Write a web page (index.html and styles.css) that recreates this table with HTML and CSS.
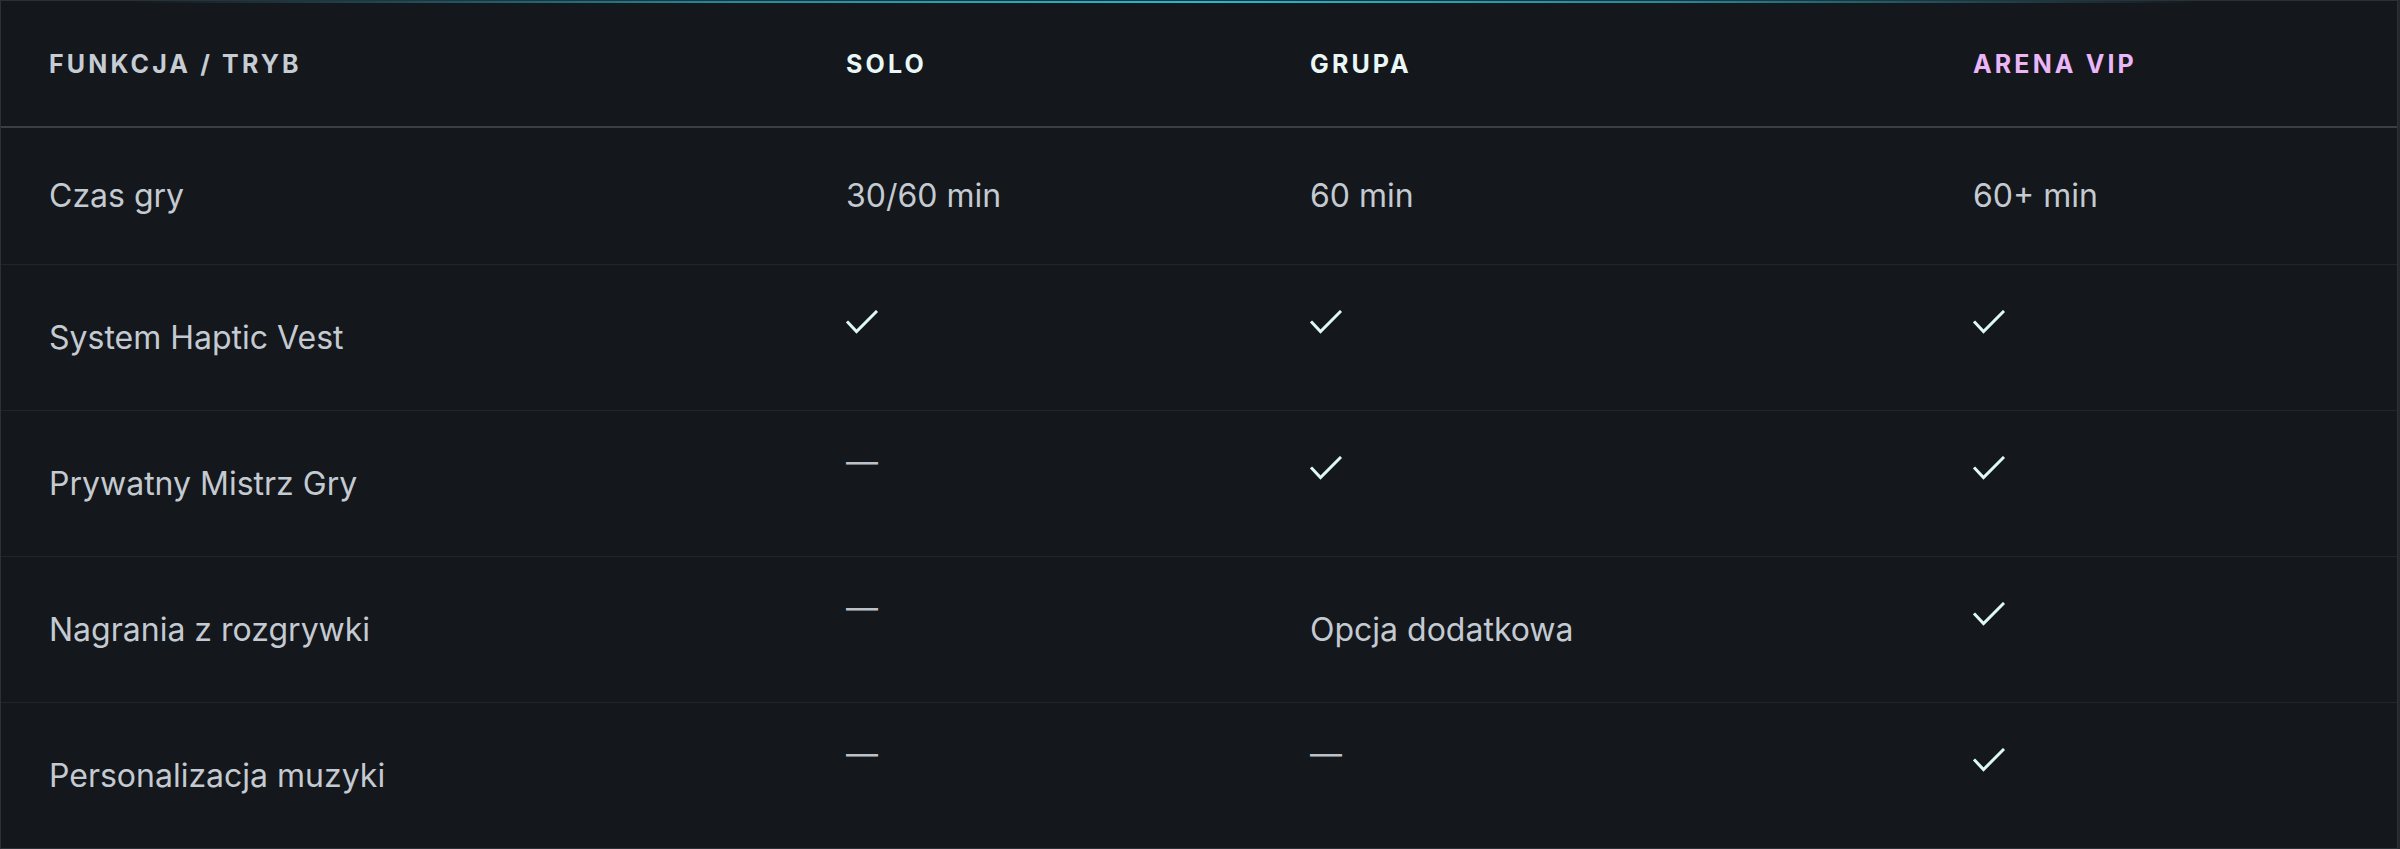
FILE: index.html
```html
<!DOCTYPE html>
<html lang="pl">
<head>
<meta charset="utf-8">
<title>Porównanie trybów</title>
<link rel="stylesheet" href="styles.css">
</head>
<body>
<div class="wrap">
  <div class="glow"></div>
  <table class="cmp">
    <colgroup>
      <col class="c1"><col class="c2"><col class="c3"><col class="c4">
    </colgroup>
    <thead>
      <tr>
        <th class="h-muted">FUNKCJA / TRYB</th>
        <th class="h-light">SOLO</th>
        <th class="h-light">GRUPA</th>
        <th class="h-vip">ARENA VIP</th>
      </tr>
    </thead>
    <tbody>
      <tr>
        <td>Czas gry</td>
        <td>30/60 min</td>
        <td>60 min</td>
        <td>60+ min</td>
      </tr>
      <tr>
        <td>System Haptic Vest</td>
        <td class="ic"><div class="mark"><svg class="chk" viewBox="0 0 32 26" width="32" height="26"><path d="M2 12.5 L10.5 21.5 L30 2"/></svg></div></td>
        <td class="ic"><div class="mark"><svg class="chk" viewBox="0 0 32 26" width="32" height="26"><path d="M2 12.5 L10.5 21.5 L30 2"/></svg></div></td>
        <td class="ic"><div class="mark"><svg class="chk" viewBox="0 0 32 26" width="32" height="26"><path d="M2 12.5 L10.5 21.5 L30 2"/></svg></div></td>
      </tr>
      <tr>
        <td>Prywatny Mistrz Gry</td>
        <td class="ic"><div class="mark"><span class="dash">—</span></div></td>
        <td class="ic"><div class="mark"><svg class="chk" viewBox="0 0 32 26" width="32" height="26"><path d="M2 12.5 L10.5 21.5 L30 2"/></svg></div></td>
        <td class="ic"><div class="mark"><svg class="chk" viewBox="0 0 32 26" width="32" height="26"><path d="M2 12.5 L10.5 21.5 L30 2"/></svg></div></td>
      </tr>
      <tr>
        <td>Nagrania z rozgrywki</td>
        <td class="ic"><div class="mark"><span class="dash">—</span></div></td>
        <td>Opcja dodatkowa</td>
        <td class="ic"><div class="mark"><svg class="chk" viewBox="0 0 32 26" width="32" height="26"><path d="M2 12.5 L10.5 21.5 L30 2"/></svg></div></td>
      </tr>
      <tr>
        <td>Personalizacja muzyki</td>
        <td class="ic"><div class="mark"><span class="dash">—</span></div></td>
        <td class="ic"><div class="mark"><span class="dash">—</span></div></td>
        <td class="ic"><div class="mark"><svg class="chk" viewBox="0 0 32 26" width="32" height="26"><path d="M2 12.5 L10.5 21.5 L30 2"/></svg></div></td>
      </tr>
    </tbody>
  </table>
</div>
</body>
</html>
```

FILE: styles.css
```css
html, body {
  margin: 0;
  padding: 0;
}
body {
  background: #25282d;
  font-family: Inter, "Noto Sans", sans-serif;
}
.wrap {
  position: relative;
  width: 2398px;
  background: #14171c;
  border: 1px solid #2c3037;
  box-sizing: border-box;
  overflow: hidden;
}
.glow {
  position: absolute;
  top: 0;
  left: 0;
  right: 0;
  height: 2px;
  background: linear-gradient(90deg, rgba(34,180,200,0) 5%, rgba(30,170,190,0.8) 30%, #22bccd 50%, rgba(30,170,190,0.8) 70%, rgba(34,180,200,0) 92%);
}
.cmp {
  width: 100%;
  table-layout: fixed;
  border-collapse: separate;
  border-spacing: 0;
}
.c1 { width: 797px; }
.c2 { width: 464px; }
.c3 { width: 663px; }
.c4 { width: auto; }

.cmp th {
  height: 125px;
  padding: 0 48px;
  text-align: left;
  vertical-align: middle;
  font-family: Inter, sans-serif;
  font-weight: 700;
  font-size: 25px;
  letter-spacing: 0.125em;
  border-bottom: 2px solid #3a3e45;
}
.h-muted { color: #c6ccd3; }
.h-light { color: #eaf7f7; }
.h-vip { color: #eab6f7; }

.cmp td {
  padding: 44px 48px 44px;
  font-size: 32px;
  line-height: 48px;
  color: #c4cad1;
  vertical-align: middle;
  border-bottom: 1px solid #22262c;
  white-space: nowrap;
}
.cmp tbody tr:last-child td {
  border-bottom: none;
}
.cmp td.ic {
  vertical-align: top;
}
.mark {
  height: 56px;
}
.chk {
  display: block;
  margin-top: 1px;
  fill: none;
  stroke: #def8f8;
  stroke-width: 3;
  stroke-linecap: square;
  stroke-linejoin: miter;
}
.dash {
  display: block;
  font-size: 32px;
  line-height: 13px;
  color: #bcc1c8;
}
```
